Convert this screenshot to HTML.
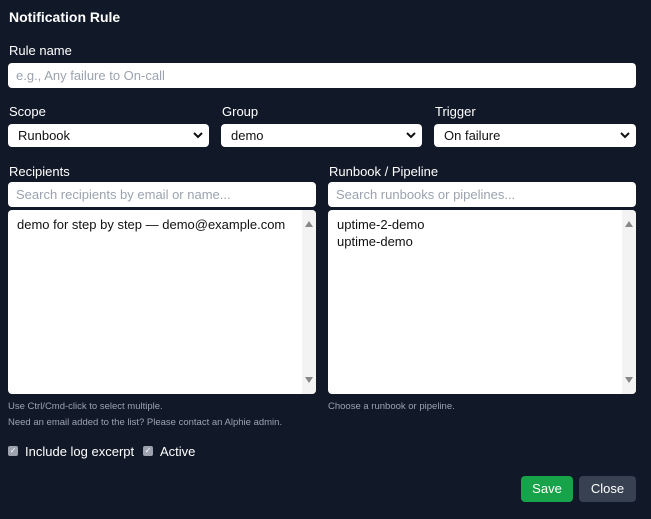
<!DOCTYPE html><html><head><style>
body{margin:0;width:651px;height:519px;background:#111827;font-family:"Liberation Sans",sans-serif;color:#fff;position:relative;overflow:hidden}
.a{position:absolute}
.t{font-weight:bold;font-size:14px}
.l{font-size:13px}
.box{position:absolute;background:#fff;border-radius:4px;color:#111;font-size:13px;box-sizing:border-box}
.ph{color:#9ca3af;padding-left:8px;line-height:25px}
.sel{padding-left:10px;line-height:23px}
.sel svg{position:absolute;right:6px;top:8px}
.sb{position:absolute;right:0;top:0;bottom:0;width:14px;background:#f3f3f3;border-radius:0 4px 4px 0}
.h{font-size:9.5px;color:#9ca3af}
.cb{width:10px;height:10px;background:#9ca3af;border-radius:2px;color:#fff;font-size:8px;line-height:10px;text-align:center}
.btn{position:absolute;border-radius:4px;font-size:13px;text-align:center;line-height:26px;color:#fff}
</style></head><body>
<div class="a t" style="left:9px;top:9px">Notification Rule</div>
<div class="a l" style="left:9px;top:43px">Rule name</div>
<div class="box ph" style="left:8px;top:63px;width:628px;height:25px">e.g., Any failure to On-call</div>
<div class="a l" style="left:9px;top:104px">Scope</div>
<div class="a l" style="left:222px;top:104px">Group</div>
<div class="a l" style="left:435px;top:104px">Trigger</div>
<div class="box sel" style="left:8px;top:124px;width:201px;height:23px">Runbook<svg width="10" height="7"><path d="M1 1l4 4 4-4" stroke="#111" stroke-width="2" fill="none"/></svg></div>
<div class="box sel" style="left:221px;top:124px;width:201px;height:23px">demo<svg width="10" height="7"><path d="M1 1l4 4 4-4" stroke="#111" stroke-width="2" fill="none"/></svg></div>
<div class="box sel" style="left:434px;top:124px;width:202px;height:23px">On failure<svg width="10" height="7"><path d="M1 1l4 4 4-4" stroke="#111" stroke-width="2" fill="none"/></svg></div>
<div class="a l" style="left:9px;top:164px">Recipients</div>
<div class="a l" style="left:329px;top:164px">Runbook / Pipeline</div>
<div class="box ph" style="left:8px;top:182px;width:308px;height:25px">Search recipients by email or name...</div>
<div class="box ph" style="left:328px;top:182px;width:308px;height:25px">Search runbooks or pipelines...</div>
<div class="box" style="left:8px;top:210px;width:308px;height:184px;padding:6px 9px;line-height:17px">demo for step by step — demo@example.com<div class="sb"><svg width="14" height="184" style="position:absolute;left:0;top:0"><path d="M3 17h8l-4-6z M3 167h8l-4 6z" fill="#888"/></svg></div></div>
<div class="box" style="left:328px;top:210px;width:308px;height:184px;padding:6px 9px;line-height:17px">uptime-2-demo<br>uptime-demo<div class="sb"><svg width="14" height="184" style="position:absolute;left:0;top:0"><path d="M3 17h8l-4-6z M3 167h8l-4 6z" fill="#888"/></svg></div></div>
<div class="a h" style="left:8px;top:401px">Use Ctrl/Cmd-click to select multiple.</div>
<div class="a h" style="left:8px;top:417px">Need an email added to the list? Please contact an Alphie admin.</div>
<div class="a h" style="left:328px;top:401px">Choose a runbook or pipeline.</div>
<div class="a cb" style="left:8px;top:446px">✓</div>
<div class="a l" style="left:25px;top:444px">Include log excerpt</div>
<div class="a cb" style="left:143px;top:446px">✓</div>
<div class="a l" style="left:160px;top:444px">Active</div>
<div class="btn" style="left:521px;top:476px;width:52px;background:#16a34a">Save</div>
<div class="btn" style="left:579px;top:476px;width:57px;background:#374151">Close</div>
</body></html>
